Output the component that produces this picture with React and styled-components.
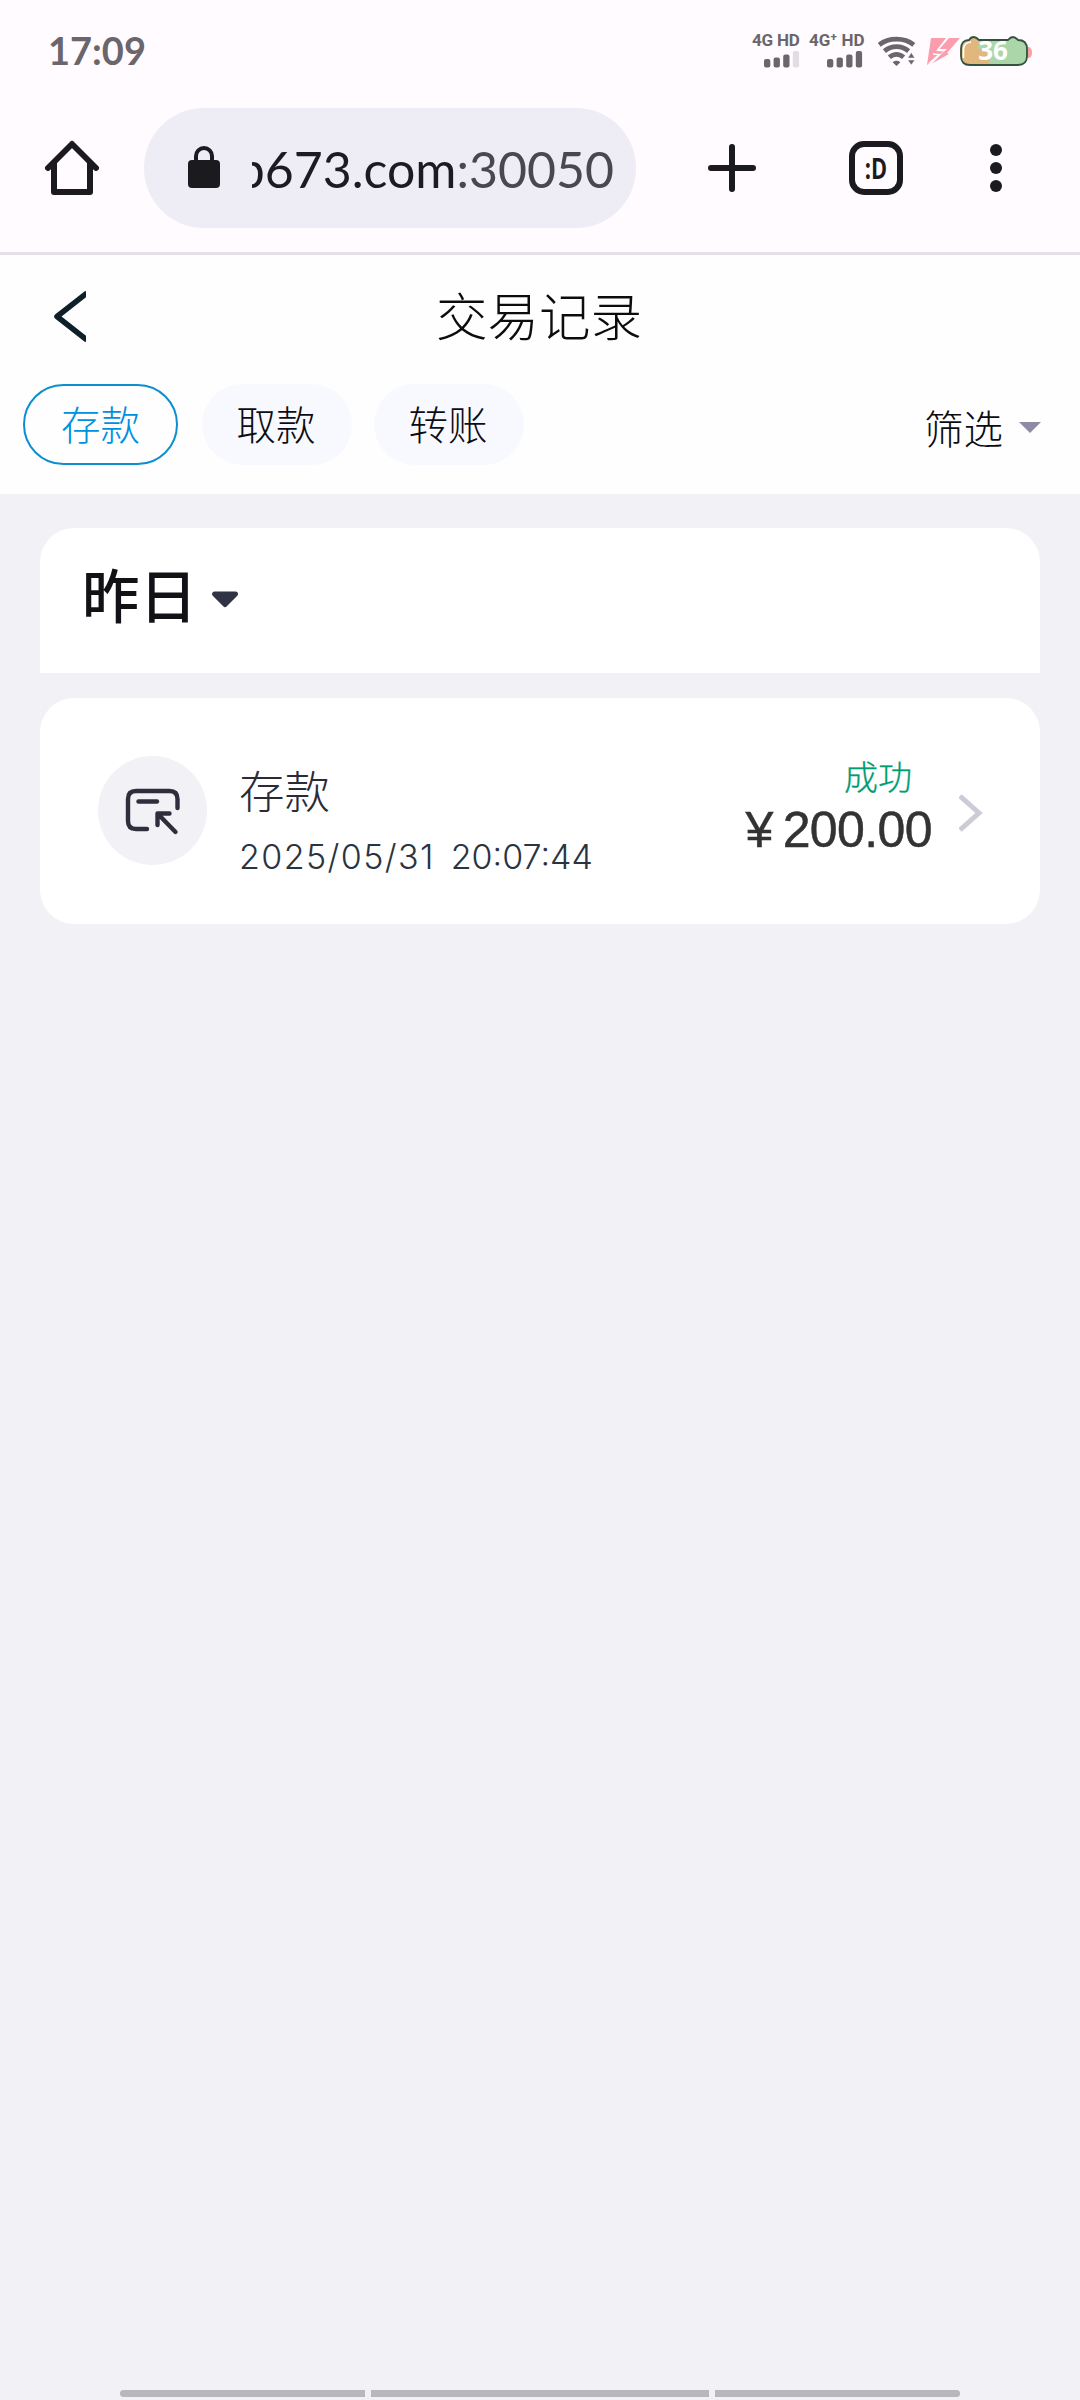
import React from "react";
import styled, { createGlobalStyle } from "styled-components";

const cjk = `"Noto Sans CJK SC", sans-serif`;

const GlobalStyle = createGlobalStyle`
  * { box-sizing: border-box; }
  body { margin: 0; background: #f1f1f6; font-family: "Liberation Sans", ${cjk}; }
  svg { display: block; flex: none; }
`;

const Screen = styled.div`
  width: 1080px;
  height: 2400px;
  display: flex;
  flex-direction: column;
  overflow: hidden;
  background: #f1f1f6;
`;

const StatusBar = styled.header`
  height: 108px;
  padding: 0 48px 0 48px;
  display: flex;
  align-items: flex-start;
  justify-content: space-between;
  background: #fffbff;
  color: #6a666b;
`;

const Clock = styled.div`
  padding-top: 26px;
  font: 700 38px/48px Lato, sans-serif;
`;

const StatusIcons = styled.div`
  display: flex;
  padding-top: 33px;
`;

const Signal = styled.div`
  width: ${(p) => p.$width}px;
  display: flex;
  flex-direction: column;
  gap: 3px;
`;

const SignalLabel = styled.div`
  font: 700 17px/15px Roboto, sans-serif;
  letter-spacing: ${(p) => p.$spacing}px;
  white-space: pre;
`;

const BrowserBar = styled.div`
  height: 147px;
  padding: 0 0 24px 44px;
  border-bottom: 3px solid #e3e1e7;
  background: #fffbff;
  display: flex;
  align-items: center;
`;

const AddressPill = styled.div`
  width: 492px;
  height: 120px;
  margin: 0 72px 0 44px;
  padding: 0 22px 0 44px;
  border-radius: 60px;
  background: #eeedf5;
  display: flex;
  align-items: center;
`;

const Address = styled.div`
  flex: 1;
  margin-left: 32px;
  padding-top: 2px;
  display: flex;
  justify-content: flex-end;
  overflow: hidden;
  white-space: nowrap;
  font: 400 50px/60px Lato, sans-serif;
  color: #1b1b22;
`;

const Port = styled.span`
  color: #494850;
`;

const TabCounter = styled.div`
  width: 54px;
  height: 54px;
  margin: 0 87px 0 93px;
  border: 6px solid #1b1b1f;
  border-radius: 15px;
  display: flex;
  align-items: center;
  justify-content: center;
  font: 700 29px/40px "Open Sans", sans-serif;
  color: #1b1b1f;
`;

const TabFace = styled.span`
  transform: scaleX(0.75);
`;

const PageHeader = styled.section`
  height: 239px;
  background: #fefefe;
`;

const TitleRow = styled.div`
  height: 123px;
  padding: 0 54px;
  display: grid;
  grid-template-columns: 32px 1fr 32px;
  align-items: center;
`;

const Title = styled.h1`
  margin: 0;
  padding: 0 2px 6px 0;
  text-align: center;
  font: 300 51.5px/74px ${cjk};
  color: #0c0c0e;
`;

const FilterRow = styled.div`
  padding: 6px 38px 0 23px;
  display: flex;
`;

const Tab = styled.button`
  width: ${(p) => (p.$active ? 155 : 150)}px;
  height: 81px;
  padding: 0 ${(p) => (p.$active ? 0 : 2)}px 4px 0;
  margin-right: ${(p) => (p.$active ? 24 : 22)}px;
  border: ${(p) => (p.$active ? "2px solid #0a8fd0" : "0")};
  border-radius: 41px;
  background: ${(p) => (p.$active ? "#fefefe" : "#f8f9fe")};
  color: ${(p) => (p.$active ? "#0090de" : "#0c0c12")};
  font: 300 39.5px/56px ${cjk};
`;

const FilterButton = styled.div`
  margin-left: auto;
  padding-top: 4px;
  height: 81px;
  display: flex;
  align-items: center;
  gap: 15px;
  font: 300 39.5px/56px ${cjk};
  color: #0c0c0e;

  svg {
    margin-top: 3px;
  }
`;

const List = styled.main`
  flex: 1;
  padding: 34px 40px 0;
  display: flex;
  flex-direction: column;
  gap: 25px;
`;

const DayCard = styled.section`
  height: 145px;
  padding: 0 0 15px 42px;
  border-radius: 34px 34px 0 0;
  background: #fff;
  display: flex;
  align-items: center;
  gap: 13px;

  svg {
    margin-top: 14px;
  }
`;

const DayLabel = styled.h2`
  margin: 0;
  font: 500 57.5px/80px ${cjk};
  color: #121216;
`;

const RecordCard = styled.article`
  height: 226px;
  padding: 58px 57px 0 58px;
  border-radius: 34px;
  background: #fff;
  display: flex;
  align-items: flex-start;
`;

const IconCircle = styled.div`
  width: 109px;
  height: 109px;
  border-radius: 50%;
  background: #f1f1f6;
  display: flex;
  align-items: center;
  justify-content: center;
`;

const Details = styled.div`
  margin-left: 32px;
  flex: 1;
`;

const Kind = styled.div`
  font: 300 45.5px/66px ${cjk};
  color: #2b2b38;
`;

const Timestamp = styled.div`
  margin-top: 13px;
  display: flex;
  gap: 16px;
  font: 300 34px/44px Inter, sans-serif;
  color: #2a3440;
`;

const DatePart = styled.span`
  letter-spacing: 1.4px;
`;

const Result = styled.div`
  display: flex;
  flex-direction: column;
  align-items: flex-end;
  margin-top: -5px;
`;

const Outcome = styled.div`
  padding-right: 20px;
  font: 300 34px/50px ${cjk};
  color: #009c72;
  -webkit-text-stroke: 0.3px #009c72;
`;

const Amount = styled.div`
  margin-top: 1px;
  display: flex;
  gap: 10px;
  font: 400 50px/56px "Liberation Sans", sans-serif;
  letter-spacing: -0.6px;
  color: #333;
  -webkit-text-stroke: 0.5px #333;
`;

const ArrowSlot = styled.div`
  padding: 37px 0 0 27px;
`;

const NavBar = styled.footer`
  height: 10px;
  padding: 0 120px;
  display: flex;
  gap: 6px;
`;

const NavSegment = styled.div`
  height: 7px;
  flex: ${(p) => p.$grow};
  border-radius: ${(p) => p.$radius};
  background: #b8b8bb;
`;

const SignalBars = ({ x, weak }) => (
  <svg width="56" height="17" viewBox="0 0 56 17" fill="#6a666b">
    <rect x={x} y="8" width="6.3" height="8.5" rx="2" />
    <rect x={x + 9.6} y="6.5" width="6.3" height="10" rx="2" />
    <rect x={x + 19.2} y="3.5" width="6.3" height="13" rx="2" />
    <rect x={x + 28.8} y="0" width="6.3" height="16.5" rx="2" fill={weak ? "#e2dde3" : "#6a666b"} />
  </svg>
);

const Wifi = () => (
  <svg width="49" height="34" viewBox="0 0 49 34" fill="none" stroke="#6a666b" strokeWidth="4.8">
    <path d="M1.2 11.8C10.500 4.200 26.500 4.200 35.800 11.800" />
    <path d="M6.400 18.200C13.500 12.200 23.500 12.200 30.600 18.200" />
    <path d="M11.400 24.300C15.800 20.400 21.200 20.400 25.600 24.300" />
    <path d="M14.600 29.200Q18.500 26.400 22.400 29.200L18.500 33Z" fill="#6a666b" stroke="none" />
    <path d="M33.300 19.500L36.800 25H29.800ZM33.300 32L36.800 27H29.800Z" fill="#6a666b" stroke="#fffbff" strokeWidth="0.5" />
  </svg>
);

const Bolt = () => (
  <svg width="33" height="34" viewBox="0 0 33 34">
    <path d="M4 5H19L9 18L17 18.500L11 22.500L0 32Z" fill="#fb9dac" />
    <path d="M22 5H33L20 20L22 21L5 30.500L14 21.500L20 16L12.500 16Z" fill="#fb9dac" />
    <path d="M2 30.500L12 21.500L6 21" fill="none" stroke="#fffbff" strokeWidth="1.500" />
  </svg>
);

const Battery = () => (
  <svg width="72" height="34" viewBox="0 0 72 34">
    <path d="M67 14h2q3 1 3 5.500t-3 5.500h-2z" fill="#f5a3a0" />
    <path d="M1 16Q1 7 9 7Q13 1 19 7H48Q53 1 58 7Q67 7 67 16V23Q67 32 58 32H10Q1 32 1 23Z" fill="#abd6a9" />
    <path d="M1 16Q1 7 9 7Q13 1 19 7H21L17 15L24 17L29 24L29 32H10Q1 32 1 23Z" fill="#e2b77e" />
    <path d="M3.500 25V16Q4 9.500 11 9" fill="none" stroke="#fff" strokeWidth="1.600" />
    <path d="M1 16Q1 7 9 7Q13 1 19 7H48Q53 1 58 7Q67 7 67 16V23Q67 32 58 32H10Q1 32 1 23Z" fill="none" stroke="#315340" strokeWidth="1.800" />
    <text x="33" y="27" textAnchor="middle" fontFamily="Open Sans, sans-serif" fontWeight="700" fontSize="26" fill="#fff">36</text>
  </svg>
);

const Home = () => (
  <svg width="56" height="56" viewBox="0 0 56 56" fill="none" stroke="#1b1b1f" strokeWidth="6" strokeLinecap="round" strokeLinejoin="round">
    <path d="M4 28L28 4L52 28" />
    <path d="M10 23V52H46V23" />
  </svg>
);

const Lock = () => (
  <svg width="32" height="44" viewBox="0 0 32 44">
    <rect y="14" width="32" height="28" rx="4" fill="#1b1b1f" />
    <path d="M8 16V10a8 8 0 0 1 16 0V16" fill="none" stroke="#1b1b1f" strokeWidth="4" />
  </svg>
);

const Plus = () => (
  <svg width="48" height="48" viewBox="0 0 48 48" stroke="#1b1b1f" strokeWidth="6" strokeLinecap="round">
    <path d="M24 3V45M3 24H45" />
  </svg>
);

const More = () => (
  <svg width="12" height="48" viewBox="0 0 12 48" fill="#1b1b1f">
    <circle cx="6" cy="6" r="6" />
    <circle cx="6" cy="24" r="6" />
    <circle cx="6" cy="42" r="6" />
  </svg>
);

const Back = () => (
  <svg width="32" height="52" viewBox="0 0 32 52" fill="none" stroke="#0d202a" strokeWidth="5.500">
    <path d="M33 2L3 25.500L33 49" strokeLinejoin="round" />
  </svg>
);

const DepositIcon = () => (
  <svg width="56" height="56" viewBox="0 0 56 56" fill="none" stroke="#2f2e3c" strokeWidth="4.400" strokeLinecap="round" strokeLinejoin="round">
    <path d="M52.500 25V16Q52.500 8 44.500 8H11Q3 8 3 16V38Q3 46 11 46H22" />
    <path d="M13.500 18.500H32" />
    <path d="M32.500 42V30.500H44.500M33 31L50.500 49" />
  </svg>
);

export default function App() {
  return (
    <>
      <GlobalStyle />
      <Screen>
        <StatusBar>
          <Clock>17:09</Clock>
          <StatusIcons>
            <Signal $width={57}>
              <SignalLabel $spacing={-0.2}>4G HD</SignalLabel>
              <SignalBars x={12} weak />
            </Signal>
            <Signal $width={69}>
              <SignalLabel $spacing={0}>4G⁺ HD</SignalLabel>
              <SignalBars x={18} />
            </Signal>
            <Wifi />
            <Bolt />
            <Battery />
          </StatusIcons>
        </StatusBar>
        <BrowserBar>
          <Home />
          <AddressPill>
            <Lock />
            <Address>
              <span>b673.com<Port>:30050</Port></span>
            </Address>
          </AddressPill>
          <Plus />
          <TabCounter><TabFace>:D</TabFace></TabCounter>
          <More />
        </BrowserBar>
        <PageHeader>
          <TitleRow>
            <Back />
            <Title>交易记录</Title>
          </TitleRow>
          <FilterRow>
            <Tab $active>存款</Tab>
            <Tab>取款</Tab>
            <Tab>转账</Tab>
            <FilterButton>
              筛选
              <svg width="24" height="12" viewBox="0 0 24 12"><path d="M1 0H23L12 11Z" fill="#8d8ca4" /></svg>
            </FilterButton>
          </FilterRow>
        </PageHeader>
        <List>
          <DayCard>
            <DayLabel>昨日</DayLabel>
            <svg width="30" height="20" viewBox="0 0 30 20"><path d="M4.500 4H25.500L15 14.500Z" fill="#2f3344" stroke="#2f3344" strokeWidth="5" strokeLinejoin="round" /></svg>
          </DayCard>
          <RecordCard>
            <IconCircle><DepositIcon /></IconCircle>
            <Details>
              <Kind>存款</Kind>
              <Timestamp>
                <DatePart>2025/05/31</DatePart>
                <span>20:07:44</span>
              </Timestamp>
            </Details>
            <Result>
              <Outcome>成功</Outcome>
              <Amount><span>¥</span><span>200.00</span></Amount>
            </Result>
            <ArrowSlot>
              <svg width="24" height="40" viewBox="0 0 24 40"><path d="M1 3L20 20L1 37" fill="none" stroke="#cbccd6" strokeWidth="5" /></svg>
            </ArrowSlot>
          </RecordCard>
        </List>
        <NavBar>
          <NavSegment $grow={245} $radius="4px 0 0 4px" />
          <NavSegment $grow={338} $radius="0" />
          <NavSegment $grow={245} $radius="0 4px 4px 0" />
        </NavBar>
      </Screen>
    </>
  );
}
